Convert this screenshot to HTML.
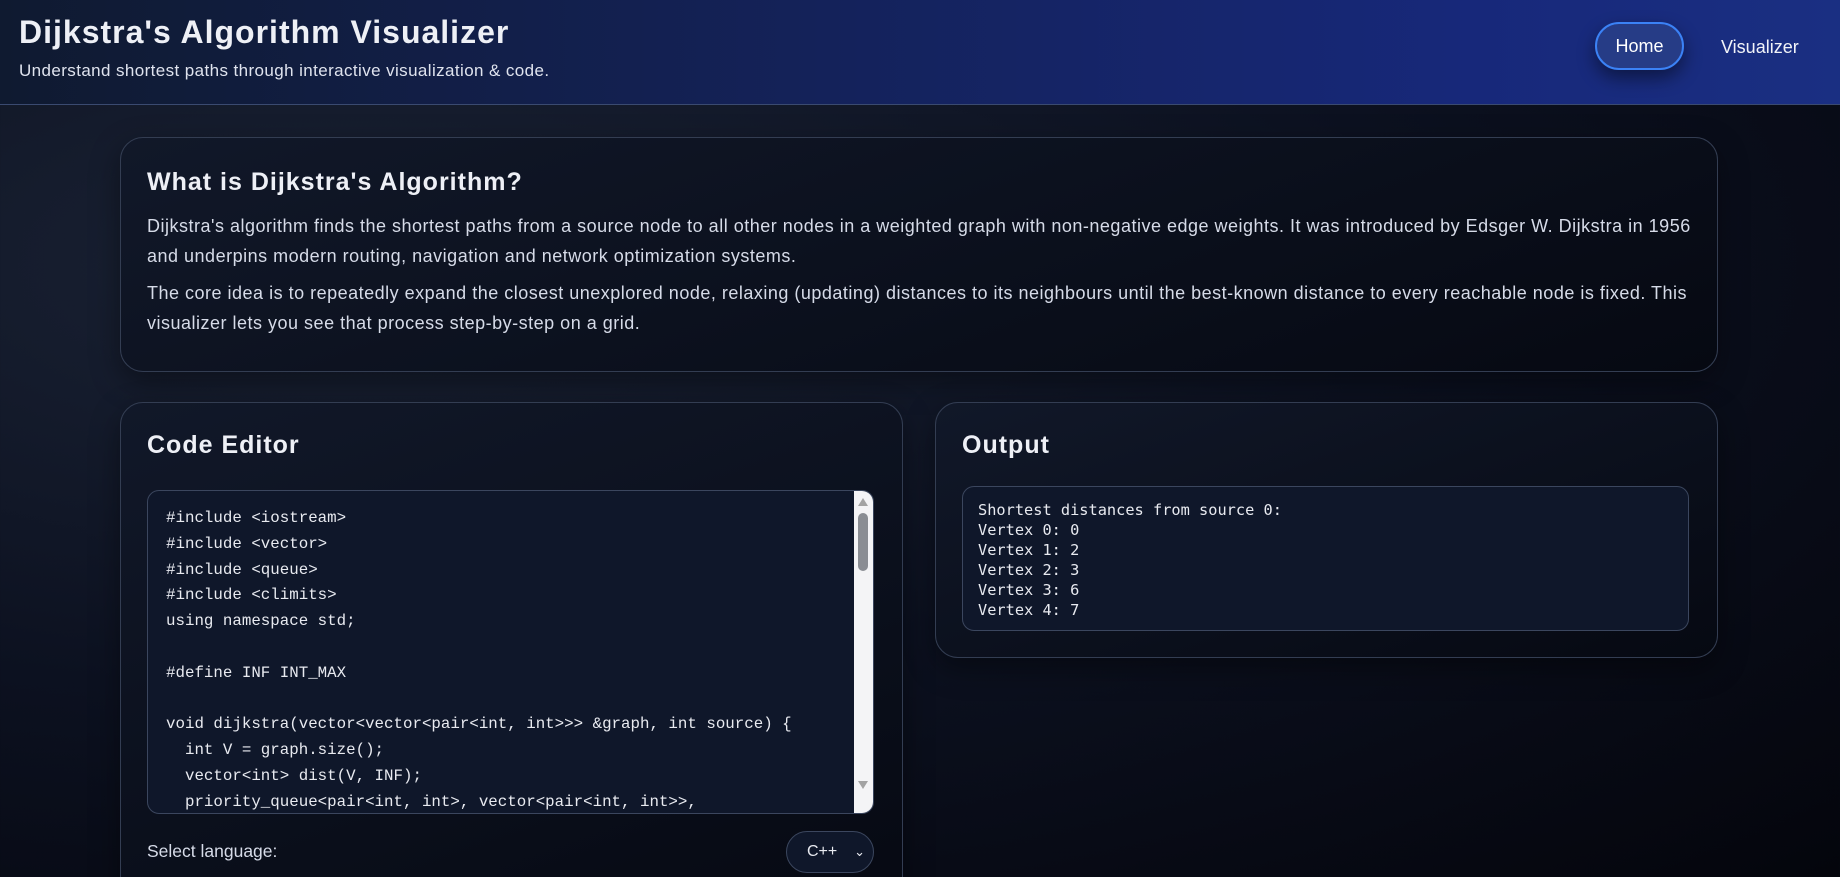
<!DOCTYPE html>
<html><head><meta charset="utf-8"><style>
*{box-sizing:border-box;margin:0;padding:0}
html,body{width:1840px;height:877px;overflow:hidden}
body{font-family:"Liberation Sans",sans-serif;color:#e5e7eb;
background:radial-gradient(ellipse at 20% 30%,#1a2234 0%,#0c1120 50%,#04050c 100%);position:relative}
header{position:absolute;left:0;top:0;width:1840px;height:105px;
background:linear-gradient(90deg,#0f1a30 0%,#14225a 45%,#17287a 80%,#1a2f82 100%);border-bottom:1px solid #3a4a70}
h1{position:absolute;left:19px;top:14px;font-size:32px;letter-spacing:1px;font-weight:bold;color:#eef0f6}
.sub{position:absolute;left:19px;top:61px;font-size:17px;letter-spacing:0.4px;color:#dfe3ee}
.home{position:absolute;left:1595px;top:22px;width:89px;height:48px;border-radius:24px;border:2px solid #3b82f6;
background:#263c86;color:#fff;font-size:18px;text-align:center;line-height:44px;box-shadow:0 8px 18px rgba(0,0,0,.45)}
.vis{position:absolute;left:1721px;top:37px;font-size:18px;color:#f1f3f8}
.card{position:absolute;border:1px solid #333d52;border-radius:23px;background:linear-gradient(160deg,#111829,#060912);box-shadow:0 10px 30px rgba(0,0,0,.4)}
h2{font-size:25px;letter-spacing:1px;font-weight:bold;color:#eef0f6;position:absolute}
.p{position:absolute;left:147px;font-size:18px;letter-spacing:0.5px;line-height:30px;color:#d6dbe8;width:1560px}
.ta{position:absolute;left:147px;top:490px;width:727px;height:324px;border:1px solid #3b465e;border-radius:12px;background:#0f172a;overflow:hidden}
.code{position:absolute;left:18px;top:15px;font-family:"Liberation Mono",monospace;font-size:15.8px;line-height:25.8px;color:#e8eaf0;white-space:pre}
.sb{position:absolute;right:0;top:0;width:19px;height:100%;background:#f4f4f6}
.out{position:absolute;left:962px;top:486px;width:727px;height:145px;border:1px solid #3b465e;border-radius:12px;background:#0f172a}
.otxt{position:absolute;left:15px;top:13px;font-family:"DejaVu Sans Mono",monospace;font-size:15.3px;line-height:20px;color:#e8eaf0;white-space:pre}
</style></head><body>
<header>
<h1>Dijkstra's Algorithm Visualizer</h1>
<div class="sub">Understand shortest paths through interactive visualization &amp; code.</div>
<div class="home">Home</div>
<div class="vis">Visualizer</div>
</header>
<div class="card" style="left:120px;top:137px;width:1598px;height:235px"></div>
<h2 style="left:147px;top:168px">What is Dijkstra's Algorithm?</h2>
<div class="p" style="top:211px">Dijkstra's algorithm finds the shortest paths from a source node to all other nodes in a weighted graph with non-negative edge weights. It was introduced by Edsger W. Dijkstra in 1956<br>and underpins modern routing, navigation and network optimization systems.</div>
<div class="p" style="top:278px">The core idea is to repeatedly expand the closest unexplored node, relaxing (updating) distances to its neighbours until the best-known distance to every reachable node is fixed. This<br>visualizer lets you see that process step-by-step on a grid.</div>

<div class="card" style="left:120px;top:402px;width:783px;height:520px"></div>
<h2 style="left:147px;top:431px">Code Editor</h2>
<div class="ta"><div class="code">#include &lt;iostream&gt;
#include &lt;vector&gt;
#include &lt;queue&gt;
#include &lt;climits&gt;
using namespace std;

#define INF INT_MAX

void dijkstra(vector&lt;vector&lt;pair&lt;int, int&gt;&gt;&gt; &amp;graph, int source) {
  int V = graph.size();
  vector&lt;int&gt; dist(V, INF);
  priority_queue&lt;pair&lt;int, int&gt;, vector&lt;pair&lt;int, int&gt;&gt;,</div>
<div class="sb"><div style="position:absolute;left:4px;top:22px;width:10px;height:58px;border-radius:5px;background:#8a8d93"></div>
<div style="position:absolute;left:4px;top:7px;width:0;height:0;border-left:5px solid transparent;border-right:5px solid transparent;border-bottom:8px solid #a3a3a3"></div>
<div style="position:absolute;left:4px;top:290px;width:0;height:0;border-left:5px solid transparent;border-right:5px solid transparent;border-top:8px solid #a3a3a3"></div></div></div>
<div style="position:absolute;left:147px;top:841px;font-size:17.5px;color:#d6dbe8">Select language:</div>
<div style="position:absolute;left:786px;top:831px;width:88px;height:42px;border:1px solid #3b465e;border-radius:21px;background:#0f172a;color:#e8eaf0;font-size:16px;line-height:40px;padding-left:20px">C++<span style="position:absolute;right:8px;top:0;font-size:13px">&#8964;</span></div>

<div class="card" style="left:935px;top:402px;width:783px;height:256px"></div>
<h2 style="left:962px;top:431px">Output</h2>
<div class="out"><div class="otxt">Shortest distances from source 0:
Vertex 0: 0
Vertex 1: 2
Vertex 2: 3
Vertex 3: 6
Vertex 4: 7</div></div>
</body></html>
